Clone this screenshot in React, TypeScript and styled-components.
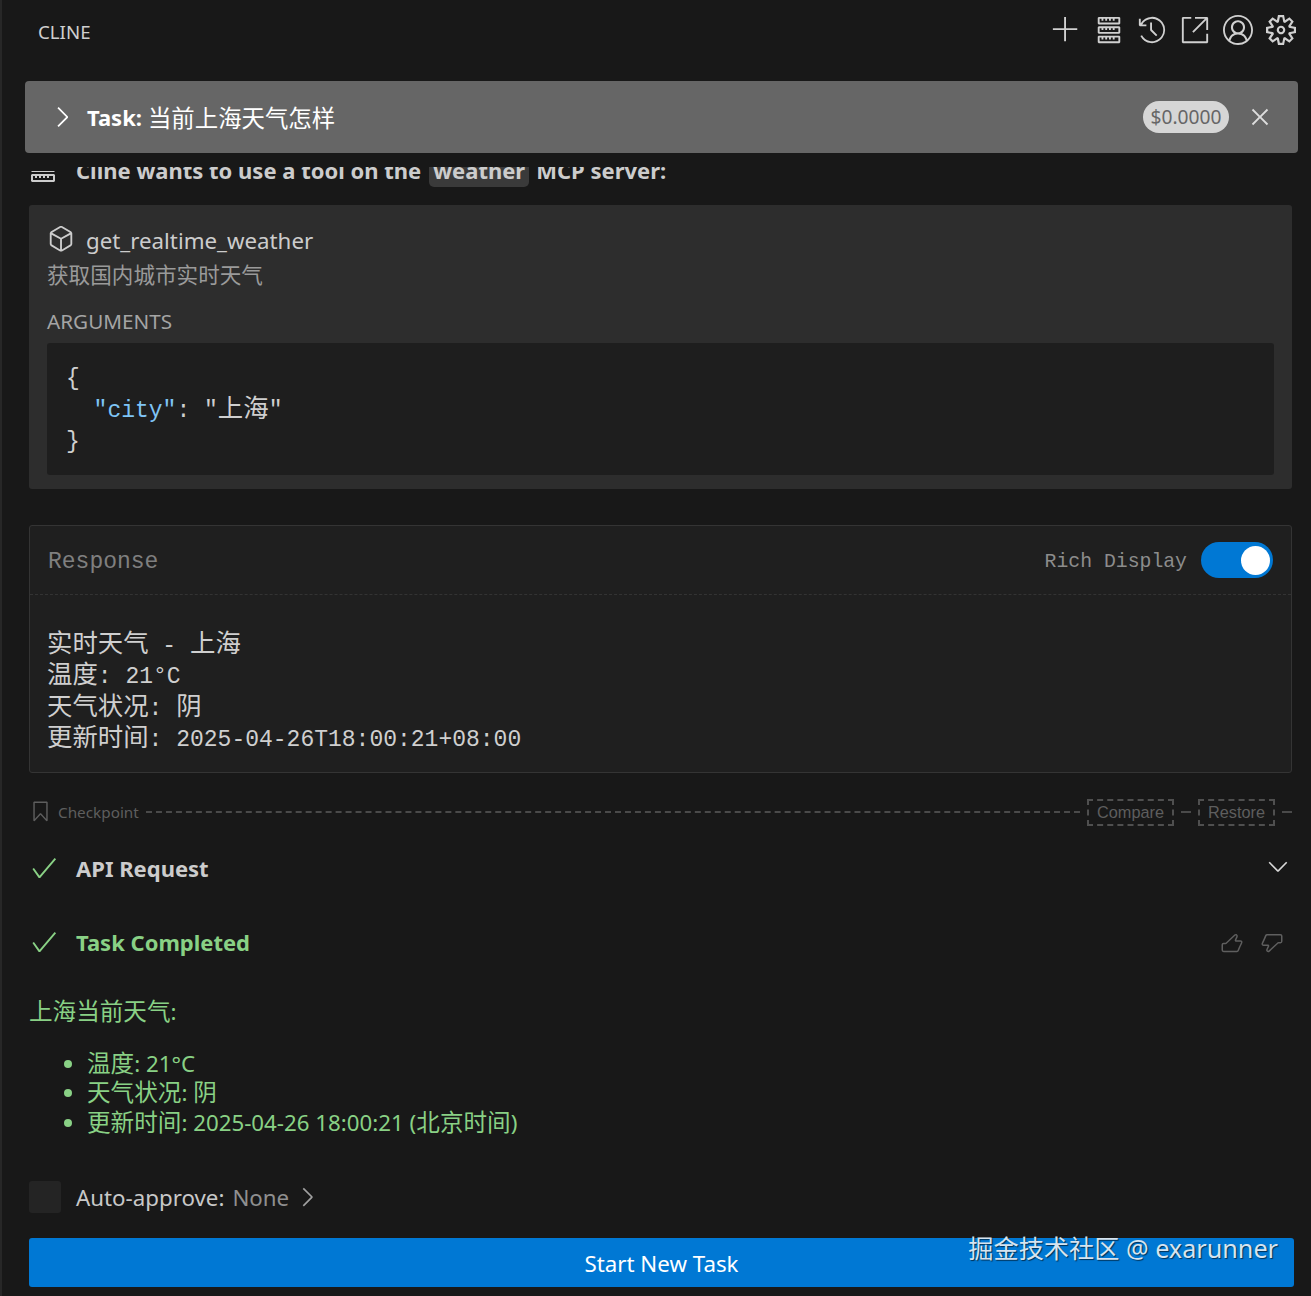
import React from "react";
import styled, { createGlobalStyle } from "styled-components";
import {
  VscAdd, VscServer, VscHistory, VscLinkExternal, VscAccount, VscSettingsGear,
  VscChevronRight, VscChevronDown, VscClose, VscSymbolMethod, VscCheck, VscBookmark,
  VscThumbsup, VscThumbsdown,
} from "react-icons/vsc";

const SANS = `"Noto Sans", "Noto Sans CJK SC", sans-serif`;
const MONO = `"Liberation Mono", "Noto Sans CJK SC", monospace`;

const Global = createGlobalStyle`
  html, body { margin: 0; padding: 0; background: #181818; }
  * { box-sizing: border-box; }
`;

const Page = styled.div`
  position: relative;
  width: 1311px;
  height: 1296px;
  overflow: hidden;
  background: #181818;
  border-left: 2px solid #272727;
  font-family: ${SANS};
  color: #ccc;
  display: flex;
  flex-direction: column;
`;
const Cjk = styled.span<{ $size: number }>`
  font-size: ${(p) => p.$size}px;
  line-height: 0;
`;
const TitleBar = styled.header`
  height: 64px;
  margin-bottom: 17px;
  padding: 0 15px 0 36px;
  display: flex;
  align-items: center;
  justify-content: space-between;
`;
const Title = styled.div`
  font-size: 18.7px;
  color: #cfcfcf;
  margin-top: -2px;
`;
const ToolIcons = styled.div`
  display: flex;
  gap: 13px;
  align-items: center;
  color: #d0d0d0;
  font-size: 30px;
  margin-top: -4px;
  svg { display: block; }
`;
const TaskHeader = styled.div`
  margin: 0 13px 0 23px;
  height: 72px;
  border-radius: 4px;
  background: #666;
  display: flex;
  align-items: center;
  padding: 0 23px 0 21px;
  color: #fff;
  font-size: 22px;
`;
const TaskChevron = styled.span`
  font-size: 32px;
  display: flex;
  margin-right: 9px;
`;
const TaskLabel = styled.b`
  font-weight: 700;
  margin-right: 6px;
`;
const TaskText = styled.span`
  flex: 1;
  margin-top: 1px;
`;
const Cost = styled.span`
  height: 32px;
  border-radius: 16px;
  background: #d6d6d6;
  color: #666;
  font-size: 19.2px;
  line-height: 32px;
  padding: 0 7.5px;
  margin-right: 16px;
`;
const CloseIcon = styled.span`
  font-size: 30px;
  display: flex;
  color: #ddd;
`;
const Clip = styled.div`
  margin: 14px 0 0 0;
  height: 20px;
  overflow: hidden;
`;
const ClipInner = styled.div`
  margin-top: -14px;
  height: 34px;
  padding-left: 27px;
  display: flex;
  align-items: center;
  font-size: 22px;
  font-weight: 700;
  white-space: nowrap;
  color: #ccc;
`;
const ClipIcon = styled.span`
  font-size: 32px;
  height: 13px;
  overflow: hidden;
  display: flex;
  align-items: flex-end;
  align-self: flex-end;
  margin: 0 17px 3px -2px;
  svg { flex-shrink: 0; }
`;
const Chip = styled.span`
  background: #3a3a3a;
  border-radius: 5px;
  padding: 0 4px;
  margin: 0 7px 0 8px;
  height: 34px;
  line-height: 34px;
`;
const ToolCard = styled.section`
  margin: 18px 19px 0 27px;
  height: 284px;
  background: #2d2d2d;
  border-radius: 3px;
  padding: 19px 18px 14px 18px;
  display: flex;
  flex-direction: column;
`;
const ToolName = styled.div`
  display: flex;
  align-items: center;
  gap: 10px;
  font-size: 22.3px;
  line-height: 34px;
  color: #ccc;
  svg { font-size: 30px; margin-left: -1px; margin-top: -4px; }
`;
const ToolDesc = styled.div`
  font-size: 21.6px;
  line-height: 34px;
  color: #9a9a9a;
`;
const ArgLabel = styled.div`
  font-size: 20.7px;
  line-height: 30px;
  color: #a4a4a4;
  margin-top: 14px;
`;
const CodeBox = styled.pre`
  margin: 7px 0 0 0;
  flex: 1;
  background: #1e1e1e;
  border-radius: 3px;
  padding: 21px 19px 0;
  font-family: ${MONO};
  font-size: 23px;
  line-height: 31.5px;
  color: #cfcfcf;
`;
const Key = styled.span`
  color: #7fc4f5;
`;
const ResponseCard = styled.section`
  margin: 36px 19px 0 27px;
  height: 248px;
  border: 1px solid #343434;
  border-radius: 3px;
  background: #1f1f1f;
  font-family: ${MONO};
`;
const ResponseHead = styled.div`
  height: 69px;
  border-bottom: 1px dashed #333;
  padding: 0 18px 0 18px;
  display: flex;
  align-items: center;
  justify-content: space-between;
`;
const ResponseTitle = styled.span`
  font-size: 23px;
  color: #7f7f7f;
  margin-top: 3px;
`;
const RichRow = styled.div`
  display: flex;
  align-items: center;
  gap: 14px;
  font-size: 19.8px;
  color: #8c8c8c;
`;
const RichLabel = styled.span`
  margin-top: 3px;
`;
const Toggle = styled.span`
  width: 72px;
  height: 36px;
  border-radius: 18px;
  background: #0078d4;
  display: flex;
  justify-content: flex-end;
  align-items: center;
  padding-right: 3px;
  &::after {
    content: "";
    width: 29px;
    height: 29px;
    border-radius: 50%;
    background: #fff;
  }
`;
const ResponseBody = styled.pre`
  margin: 0;
  padding: 35.6px 17px 0;
  font-family: ${MONO};
  font-size: 23px;
  line-height: 31.5px;
  color: #cfcfcf;
`;
const Checkpoint = styled.div`
  margin: 24px 12px 0 27px;
  height: 30px;
  display: flex;
  align-items: center;
  color: #5e5e5e;
  font-size: 15.3px;
`;
const CheckpointLabel = styled.span`
  display: flex;
  align-items: center;
  gap: 6px;
  svg { font-size: 23px; margin-top: -2px; }
`;
const Dashed = styled.span<{ $w?: number }>`
  border-top: 2px dashed #4a4a4a;
  height: 0;
  margin: 0 7px;
  ${(p) => (p.$w ? `width: ${p.$w}px;` : "flex: 1;")}
`;
const GhostBtn = styled.span`
  border: 2px dashed #4f4f4f;
  height: 27px;
  line-height: 23px;
  padding: 0 8px;
  font-family: "Liberation Sans", sans-serif;
  font-size: 16.3px;
  color: #5e5e5e;
`;
const StatusRow = styled.div<{ $top: number }>`
  margin: ${(p) => p.$top}px 19px 0 27px;
  height: 40px;
  display: flex;
  align-items: center;
`;
const StatusCheck = styled.span`
  color: #89d185;
  font-size: 30px;
  display: flex;
  width: 47px;
`;
const StatusText = styled.b<{ $green?: boolean }>`
  flex: 1;
  font-size: 22px;
  font-weight: 700;
  color: ${(p) => (p.$green ? "#89d185" : "#ccc")};
`;
const FeedIcons = styled.span`
  display: flex;
  gap: 16px;
  font-size: 24px;
  color: #5f5f5f;
  margin: 1px 8px 0 0;
`;
const DownIcon = styled.span`
  font-size: 30px;
  display: flex;
  color: #d8d8d8;
  margin: -4px -1px 0 0;
`;
const Answer = styled.div`
  margin: 35px 19px 0 27px;
  color: #89d185;
  font-size: 22.3px;
  line-height: 29.5px;
`;
const AnswerList = styled.ul`
  margin: 22px 0 0;
  padding-left: 58px;
  li::marker { font-size: 23px; }
`;
const AutoRow = styled.div`
  margin: 44px 0 0 27px;
  height: 32px;
  display: flex;
  align-items: center;
  font-size: 22.3px;
  color: #c8c8c8;
`;
const AutoBox = styled.span`
  width: 32px;
  height: 32px;
  border-radius: 3px;
  background: #242424;
  margin-right: 15px;
`;
const AutoValue = styled.span`
  color: #8f8f8f;
  margin-left: 8px;
`;
const AutoChevron = styled.span`
  font-size: 30px;
  display: flex;
  color: #a0a0a0;
  margin-left: 3px;
`;
const StartButton = styled.button`
  margin: 25px 0 0 27px;
  width: 1265px;
  height: 49px;
  border: 0;
  border-radius: 3px;
  background: #0078d4;
  color: #fff;
  font-family: ${SANS};
  font-size: 22.3px;
  padding: 2px 0 0;
`;
const Watermark = styled.div`
  position: absolute;
  right: 33px;
  top: 1229px;
  font-size: 25.2px;
  color: #d6e4f0;
  text-shadow: 1px 1px 1px rgba(0,0,0,.6);
  white-space: nowrap;
`;

const M = ({ children }: { children: React.ReactNode }) => <Cjk $size={25.4}>{children}</Cjk>;
const A = ({ children }: { children: React.ReactNode }) => <Cjk $size={23.6}>{children}</Cjk>;

export default function App() {
  return (
    <Page>
      <Global />
      <TitleBar>
        <Title>CLINE</Title>
        <ToolIcons>
          <VscAdd /><VscServer /><VscHistory /><VscLinkExternal /><VscAccount /><VscSettingsGear />
        </ToolIcons>
      </TitleBar>
      <TaskHeader>
        <TaskChevron><VscChevronRight /></TaskChevron>
        <TaskLabel>Task:</TaskLabel>
        <TaskText><Cjk $size={23.4}>当前上海天气怎样</Cjk></TaskText>
        <Cost>$0.0000</Cost>
        <CloseIcon><VscClose /></CloseIcon>
      </TaskHeader>
      <Clip>
        <ClipInner>
          <ClipIcon><VscServer /></ClipIcon>
          Cline wants to use a tool on the<Chip>weather</Chip>MCP server:
        </ClipInner>
      </Clip>
      <ToolCard>
        <ToolName><VscSymbolMethod />get_realtime_weather</ToolName>
        <ToolDesc>获取国内城市实时天气</ToolDesc>
        <ArgLabel>ARGUMENTS</ArgLabel>
        <CodeBox>{"{\n  "}<Key>"city"</Key>{": \""}<M>上海</M>{"\"\n}"}</CodeBox>
      </ToolCard>
      <ResponseCard>
        <ResponseHead>
          <ResponseTitle>Response</ResponseTitle>
          <RichRow><RichLabel>Rich Display</RichLabel><Toggle /></RichRow>
        </ResponseHead>
        <ResponseBody>
          <M>实时天气</M>{" - "}<M>上海</M>{"\n"}
          <M>温度</M>{": 21°C\n"}
          <M>天气状况</M>{": "}<M>阴</M>{"\n"}
          <M>更新时间</M>{": 2025-04-26T18:00:21+08:00"}
        </ResponseBody>
      </ResponseCard>
      <Checkpoint>
        <CheckpointLabel><VscBookmark />Checkpoint</CheckpointLabel>
        <Dashed />
        <GhostBtn>Compare</GhostBtn>
        <Dashed $w={10} />
        <GhostBtn>Restore</GhostBtn>
        <Dashed $w={10} />
      </Checkpoint>
      <StatusRow $top={21}>
        <StatusCheck><VscCheck /></StatusCheck>
        <StatusText>API Request</StatusText>
        <DownIcon><VscChevronDown /></DownIcon>
      </StatusRow>
      <StatusRow $top={34}>
        <StatusCheck><VscCheck /></StatusCheck>
        <StatusText $green>Task Completed</StatusText>
        <FeedIcons><VscThumbsup /><VscThumbsdown /></FeedIcons>
      </StatusRow>
      <Answer>
        <div><A>上海当前天气</A>:</div>
        <AnswerList>
          <li><A>温度</A>: 21°C</li>
          <li><A>天气状况</A>: <A>阴</A></li>
          <li><A>更新时间</A>: 2025-04-26 18:00:21 (<A>北京时间</A>)</li>
        </AnswerList>
      </Answer>
      <AutoRow>
        <AutoBox />
        Auto-approve:<AutoValue>None</AutoValue>
        <AutoChevron><VscChevronRight /></AutoChevron>
      </AutoRow>
      <StartButton>Start New Task</StartButton>
      <Watermark>掘金技术社区 @ exarunner</Watermark>
    </Page>
  );
}
